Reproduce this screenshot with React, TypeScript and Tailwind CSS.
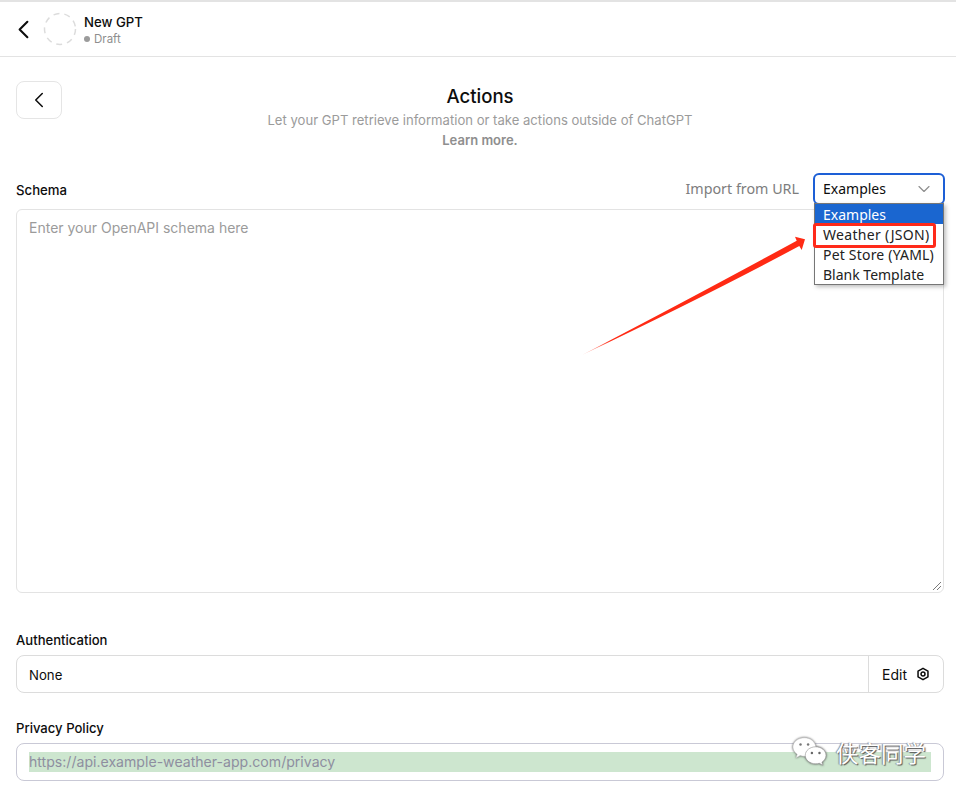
import React from "react"
import { ChevronDown, ChevronLeft } from "lucide-react"

const options = [
  { label: "Examples", cls: "h-5 pl-2 pt-px bg-[#1a66d0] text-white" },
  { label: "Weather (JSON)", cls: "h-5 pl-2 pt-px whitespace-nowrap tracking-[0.3px]" },
  { label: "Pet Store (YAML)", cls: "h-5 pl-2 pt-px whitespace-nowrap tracking-[0.2px]" },
  { label: "Blank Template", cls: "h-5 pl-2 pt-px whitespace-nowrap" },
]

const GearIcon = () => (
  <svg width="14" height="14" viewBox="0 0 24 24" fill="none" stroke="#0d0d0d" strokeWidth="2.600" strokeLinejoin="round">
    <path d="M12 2.200l8.500 4.900v9.800L12 21.800l-8.500-4.900V7.100z" />
    <circle cx="12" cy="12" r="3.400" />
  </svg>
)

const WechatIcon = () => (
  <svg width="36" height="32" viewBox="0 0 38 32" className="drop-shadow-[0_0_1px_rgba(60,60,60,0.9)]">
    <path d="M13 1C6.400 1 1 5.400 1 10.800c0 3.100 1.800 5.800 4.500 7.600L4.400 22l4.200-2.200c1.400.4 2.900.7 4.400.7 6.600 0 12-4.400 12-9.700S19.600 1 13 1z" fill="#fff" stroke="#c8c8c8" strokeWidth="0.600" />
    <path d="M25 10.500c-6 0-11 4-11 9s5 9 11 9c1.300 0 2.600-.2 3.800-.6l3.800 2-1-3.200c2.700-1.700 4.300-4.200 4.300-7.200 0-5-4.900-9-10.900-9z" fill="#fff" stroke="#9a9a9a" strokeWidth="0.700" />
    <circle cx="9" cy="8" r="1.300" fill="#777" />
    <circle cx="17" cy="8" r="1.300" fill="#777" />
    <circle cx="21" cy="17" r="1.300" fill="#666" />
    <circle cx="29" cy="17" r="1.300" fill="#666" />
  </svg>
)

const App: React.FC = () => {
  return (
    <div className="relative w-[956px] h-[795px] overflow-hidden bg-white text-[#0d0d0d] font-['Inter',sans-serif]">
      <header className="flex items-center h-[57px] border-t-2 border-b border-[#e3e3e3]">
        <ChevronLeft className="ml-[8px] size-[31px] text-[#0d0d0d]" strokeWidth={1.600} />
        <svg width="34" height="34" viewBox="0 0 34 34" className="ml-[4px]">
          <circle cx="17" cy="17" r="15.500" fill="none" stroke="#dcdcdc" strokeWidth="1.500" strokeDasharray="6 5" />
        </svg>
        <div className="ml-[7px] flex flex-col">
          <span className="text-[13.2px] leading-[18px] font-medium">New GPT</span>
          <span className="flex items-center gap-1 pt-px text-[11.5px] leading-[14px] text-[#8e8e8e]">
            <span className="size-[6px] rounded-full bg-[#9b9b9b]" />
            Draft
          </span>
        </div>
      </header>

      <main className="pl-4 pr-3 pt-6">
        <div className="grid grid-cols-[46px_1fr_46px] h-[92px]">
          <button className="flex items-center justify-center h-[38px] rounded-lg border border-[#e5e5e5]">
            <ChevronLeft className="size-[26px]" strokeWidth={1.400} />
          </button>
          <div className="flex flex-col items-center">
            <h1 className="mt-px text-[18.6px] leading-[28px] font-medium">Actions</h1>
            <p className="text-[13.1px] leading-[20px] text-[#9b9b9b]">
              Let your GPT retrieve information or take actions outside of ChatGPT
            </p>
            <p className="text-[13px] leading-[20px] font-semibold text-[#8e8e8e]">Learn more.</p>
          </div>
          <div />
        </div>

        <div className="flex items-center justify-between h-[32px]">
          <label className="mt-[4px] text-[13.2px] font-medium">Schema</label>
          <div className="flex items-center">
            <span className="text-[14.3px] text-[#7d7d7d] font-['Noto_Sans',sans-serif]">Import from URL</span>
            <div className="ml-[14px] -mr-px flex items-center justify-between w-[132px] h-[32px] pl-[8px] pr-[9px] rounded-md border-2 border-[#1d5fd6] text-[14px] font-['Noto_Sans',sans-serif]">
              <span className="pb-[2px]">Examples</span>
              <ChevronDown className="size-[20px] text-[#8e8e8e]" strokeWidth={1.400} />
            </div>
          </div>
        </div>

        <div className="relative mt-[4px] h-[384px] rounded-md border border-[#e3e3e3] px-3 py-[8px] text-[14px] leading-[20px] text-[#9b9b9b]">
          Enter your OpenAPI schema here
          <svg width="10" height="10" viewBox="0 0 10 10" className="absolute right-[1px] bottom-[1px]">
            <path d="M1 9L9 1M5 9L9 5" stroke="#7a7a7a" strokeWidth="1" />
          </svg>
        </div>

        <label className="block mt-[37px] text-[13.1px] leading-[20px] font-medium">Authentication</label>
        <div className="mt-[5px] flex h-[38px] rounded-lg border border-[#dcdcdc] text-[13.2px]">
          <div className="flex-1 flex items-center pl-3 pt-[3px]">None</div>
          <div className="flex items-center w-[75px] pl-[13px] border-l border-[#dcdcdc] text-[14px]">
            Edit
            <span className="ml-[9px]">
              <GearIcon />
            </span>
          </div>
        </div>

        <label className="block mt-[25px] text-[13.1px] leading-[20px] font-medium">Privacy Policy</label>
        <div className="mt-[5px] flex items-center h-[38px] rounded-lg border border-[#c9c9d6] pl-3 pr-3 text-[14.1px]">
          <span className="w-full h-[20px] leading-[20px] bg-[#cde6cf] text-[#8e8ea0]">
            https://api.example-weather-app.com/privacy
          </span>
        </div>
      </main>

      {/* native select popup */}
      <ul className="absolute left-[814px] top-[203px] w-[130px] h-[82px] border border-[#767676] bg-white shadow-[2px_2px_4px_rgba(0,0,0,0.25)] text-[14px] leading-[20px] text-[#222] font-['Noto_Sans',sans-serif]">
        {options.map((o) => (
          <li key={o.label} className={o.cls}>
            {o.label}
          </li>
        ))}
      </ul>

      {/* screenshot annotations */}
      <div className="absolute left-[813px] top-[223px] w-[123px] h-[25px] rounded-[3px] border-[3px] border-[#ff2a1a]" />
      <svg width="250" height="145" viewBox="0 0 250 145" className="absolute left-[570px] top-[220px]">
        <defs>
          <linearGradient id="tail" x1="12" y1="135" x2="40" y2="119" gradientUnits="userSpaceOnUse">
            <stop offset="0" stopColor="#ff2a14" stopOpacity="0.2" />
            <stop offset="1" stopColor="#ff2a14" />
          </linearGradient>
        </defs>
        <path d="M12 135Q130 73.500 226.700 20.700L225 16.700L235 19.300L231.700 30L229.300 26Q140 74 12 135Z" fill="url(#tail)" />
      </svg>

      <div className="absolute left-[792px] top-[736px] flex items-center">
        <WechatIcon />
        <span className="ml-[8px] text-[22.5px] leading-[30px] text-white [text-shadow:1px_1px_1px_#555,-1px_0_1px_#888] font-['Noto_Sans_CJK_SC',sans-serif]">
          侠客同学
        </span>
      </div>
    </div>
  )
}

export default App
